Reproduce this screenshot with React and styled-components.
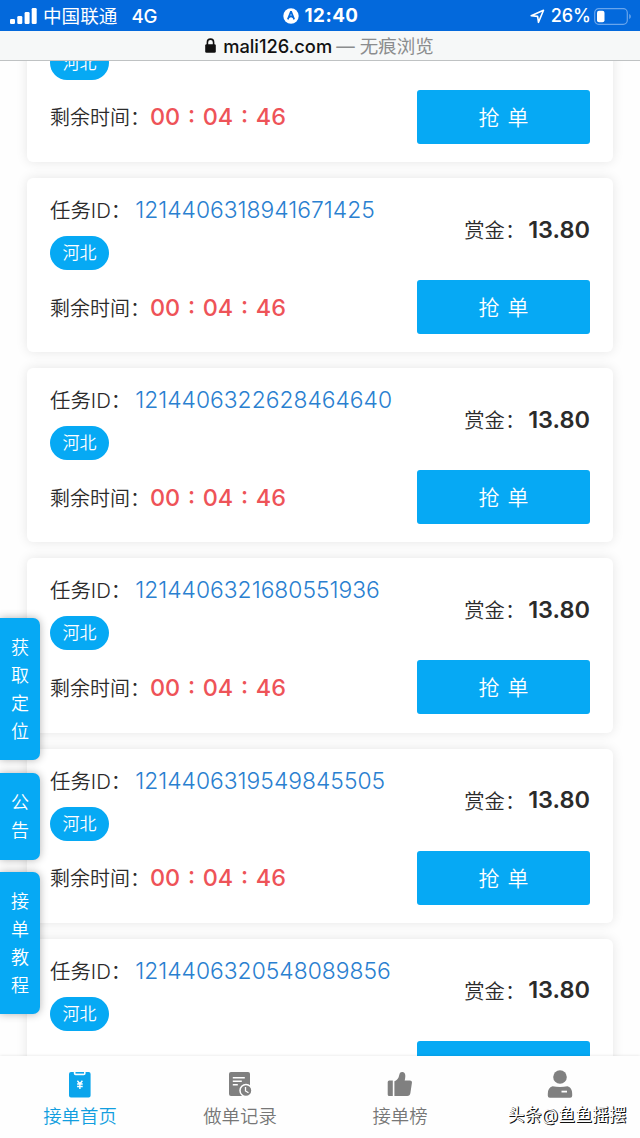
import styled, { createGlobalStyle } from "styled-components"

const GlobalStyle = createGlobalStyle`
  * {
    box-sizing: border-box;
  }

  body {
    margin: 0;
    font-family: Inter, "Noto Sans CJK SC", sans-serif;
    font-weight: 350;
    color: #2b2b2b;
    background-color: #fefefe;
  }
`

const Page = styled.div`
  position: relative;
  display: flex;
  flex-direction: column;
  width: 640px;
  height: 1138px;
  overflow: hidden;
`

const StatusBar = styled.header`
  display: grid;
  grid-template-columns: 1fr auto 1fr;
  align-items: center;
  flex: none;
  height: 31px;
  padding: 1px 8px 0 10px;
  background-color: #0369dc;
  color: #fff;
  font-size: 18px;
  font-weight: 400;
  line-height: 28px;
  white-space: nowrap;
`

const StatusGroup = styled.div`
  display: flex;
  align-items: center;
  justify-content: ${(props) => (props.$end ? "flex-end" : "flex-start")};
  gap: ${(props) => props.$gap || 0}px;
`

const Carrier = styled.span`
  margin-left: 6px;
  font-size: 18.6px;
`

const Network = styled.span`
  margin-left: 14px;
  font-size: 18.6px;
  font-weight: 500;
`

const Clock = styled.span`
  margin-left: -2px;
  font-size: 18.8px;
  font-weight: 700;
  letter-spacing: 0.5px;
`

const Battery = styled.span`
  margin-right: -3px;
  font-size: 18px;
  font-weight: 500;
`

const AddressBar = styled.div`
  display: flex;
  align-items: center;
  justify-content: center;
  flex: none;
  height: 30px;
  padding-right: 1px;
  background-color: #f6f8f8;
  border-bottom: 1px solid #bfc2c3;
  color: #111;
  font-size: 18.3px;
  font-weight: 500;
  line-height: 28px;
  white-space: nowrap;
`

const Domain = styled.span`
  margin-left: 7px;
`

const Mode = styled.span`
  margin-left: 4px;
  color: #8b8d8e;
  font-size: 18.5px;
  font-weight: 400;
`

const List = styled.main`
  display: flex;
  flex-direction: column;
  flex: 1;
  gap: 16px;
  min-height: 0;
  padding: 0 27px;
  overflow: hidden;
`

const Card = styled.section`
  display: grid;
  grid-template-columns: 1fr 173px;
  grid-template-rows: 102px 54px;
  flex: none;
  height: 174.2px;
  padding: 0 23px;
  border-radius: 6px;
  background-color: #fff;
  box-shadow: 0 0 12px rgba(0, 0, 0, 0.1);

  &:first-child {
    margin-top: -73.2px;
  }
`

const TaskInfo = styled.div`
  padding-top: 17px;
  font-size: 20.4px;
  line-height: 30px;
  white-space: nowrap;
`

const TaskId = styled.span`
  margin-left: 4px;
  color: #2a80d0;
  font-size: 22.85px;
  font-weight: 300;
`

const Region = styled.div`
  width: 59px;
  height: 34px;
  margin-top: 10px;
  border-radius: 17px;
  background-color: #06a9f4;
  color: #fff;
  font-size: 17px;
  line-height: 34px;
  text-align: center;
`

const Reward = styled.div`
  display: flex;
  align-items: center;
  justify-content: flex-end;
  height: 102px;
  font-size: 20.3px;
  white-space: nowrap;

  strong {
    margin-left: 3px;
    font-size: 23.5px;
    font-weight: 600;
  }
`

const TimeLeft = styled.div`
  display: flex;
  align-items: center;
  height: 54px;
  font-size: 20px;
`

const Countdown = styled.span`
  color: #ee5358;
  font-size: 23.4px;
  font-weight: 500;
  white-space: pre;
  word-spacing: 1.5px;
`

const GrabButton = styled.button`
  height: 54px;
  padding-bottom: 3px;
  border: 0;
  border-radius: 3px;
  background-color: #06a9f4;
  color: #fff;
  font: inherit;
  font-size: 21px;
  word-spacing: 2px;
`

const SideMenu = styled.aside`
  position: absolute;
  top: 618px;
  left: 0;
  display: flex;
  flex-direction: column;
  gap: 12.5px;
`

const SideItem = styled.div`
  width: 40px;
  padding: 16px 11px 15px;
  border-radius: 0 7px 7px 0;
  background-color: #06a9f4;
  box-shadow: 0 0 9px rgba(0, 0, 0, 0.3);
  color: #fff;
  font-size: 18px;
  line-height: 27.85px;
  word-break: break-all;
`

const TabBar = styled.nav`
  display: grid;
  grid-template-columns: repeat(4, 1fr);
  flex: none;
  height: 82px;
  background-color: #fefefe;
  box-shadow: 0 0 3px rgba(0, 0, 0, 0.12);
  z-index: 1;
`

const Tab = styled.div`
  display: flex;
  flex-direction: column;
  align-items: center;
  padding-top: 12px;
  color: ${(props) => (props.$active ? "#129edf" : "#777")};
  font-size: 18.4px;
  line-height: 28px;

  svg {
    margin-bottom: 2px;
  }
`

const Watermark = styled.div`
  position: absolute;
  right: 14px;
  bottom: 9px;
  z-index: 2;
  color: #fff;
  font-size: 17px;
  font-weight: 400;
  line-height: 28px;
  white-space: nowrap;
  text-shadow: 1px 1px 0 #111, 1px 0 0 #333;
`

const tasks = [
  "1214406318941671424",
  "1214406318941671425",
  "1214406322628464640",
  "1214406321680551936",
  "1214406319549845505",
  "1214406320548089856",
]

function SignalIcon() {
  return (
    <svg width="27" height="18" viewBox="0 0 27 18" fill="#fff">
      <rect x="0" y="12" width="5" height="5" rx="1.3" />
      <rect x="7.3" y="9" width="5" height="8" rx="1.3" />
      <rect x="14.6" y="5" width="5" height="12" rx="1.3" />
      <rect x="21.7" y="1" width="5" height="16" rx="1.3" />
    </svg>
  )
}

function CompassIcon() {
  return (
    <svg width="16" height="16" viewBox="0 0 16 16">
      <circle cx="8" cy="8" r="7.7" fill="#fff" />
      <path d="M8 3.4 11.2 11.4M8 3.4 4.8 11.4M6 9.2 8 8.2 10 9.2" fill="none" stroke="#0369dc" strokeWidth="1.7" strokeLinejoin="round" />
    </svg>
  )
}

function ArrowIcon() {
  return (
    <svg width="15" height="15" viewBox="0 0 15 15" fill="none" stroke="#fff" strokeWidth="1.6" strokeLinejoin="round">
      <path d="M1.2 6.8 13.5 1.3 8.5 13.3 7.6 7.4Z" />
    </svg>
  )
}

function BatteryIcon() {
  return (
    <svg width="38" height="17" viewBox="0 0 38 17">
      <rect x="0.7" y="0.7" width="32.6" height="15.6" rx="4" fill="none" stroke="#68a5ec" strokeWidth="1.2" />
      <rect x="3" y="2.8" width="7.5" height="11.4" rx="2" fill="#fff" />
      <path d="M35.2 6v5c2.2-.8 2.2-4.2 0-5" fill="#68a5ec" />
    </svg>
  )
}

function LockIcon() {
  return (
    <svg width="11" height="15" viewBox="0 0 11 15">
      <rect x="0.2" y="6.2" width="10.6" height="8.6" rx="1.4" fill="#111" />
      <path d="M2.4 7V4.2a3.1 3.1 0 0 1 6.2 0V7" fill="none" stroke="#111" strokeWidth="1.6" />
    </svg>
  )
}

function OrderIcon() {
  return (
    <svg width="28" height="32" viewBox="0 0 28 32">
      <path d="M5 4h2.8v1.5a1.8 1.8 0 0 0 1.8 1.8h8.2a1.8 1.8 0 0 0 1.8-1.8V4h3a2 2 0 0 1 2 2v21.5a2 2 0 0 1-2 2H5a2 2 0 0 1-2-2V6a2 2 0 0 1 2-2Z" fill="#0ba5ec" />
      <path d="M9.5 4H18v1.6H9.5Z" fill="#0ba5ec" />
      <path d="m11.4 12.8 2.5 3 2.5-3M11.1 16h5.6M11.1 18.5h5.6M13.9 15.5v5.4" fill="none" stroke="#fff" strokeWidth="1.4" />
    </svg>
  )
}

function RecordIcon() {
  return (
    <svg width="28" height="32" viewBox="0 0 28 32">
      <path d="M5 4h17a2 2 0 0 1 2 2v20a2 2 0 0 1-2 2H5a2 2 0 0 1-2-2V6a2 2 0 0 1 2-2Z" fill="#808080" />
      <path d="M6.8 9.8h12M6.8 13.3h9M6.8 16.8h5" fill="none" stroke="#fff" strokeWidth="1.5" />
      <circle cx="20" cy="22.5" r="6" fill="#808080" stroke="#fff" strokeWidth="1.5" />
      <path d="M19.5 19v4l3 1.8" fill="none" stroke="#fff" strokeWidth="1.3" />
    </svg>
  )
}

function ThumbIcon() {
  return (
    <svg width="28" height="32" viewBox="0 0 28 32" fill="#808080">
      <path d="M3.2 12.5h3.6V28H3.2a1.5 1.5 0 0 1-1.5-1.5V14a1.5 1.5 0 0 1 1.5-1.5Z" />
      <path d="M8.4 13.3C12 12 12.6 9.5 13.4 6.5 14 4.4 15 3.8 16.5 4c2.9.4 3.5 3.3 2.2 8.5h5a2.2 2.2 0 0 1 2.2 2.6l-1.5 10A3.3 3.3 0 0 1 21.2 28H8.4Z" />
    </svg>
  )
}

function UserIcon() {
  return (
    <svg width="28" height="32" viewBox="0 0 28 32">
      <circle cx="14" cy="9" r="6.8" fill="#808080" />
      <path d="M6.500 18.300c5 .9 10 .9 15 0 3.200.8 4.700 3.700 4.700 7.500v2a2 2 0 0 1-2 2H3.800a2 2 0 0 1-2-2v-2c0-3.800 1.500-6.700 4.700-7.500Z" fill="#808080" />
      <path d="M15.500 23.600h5.500" stroke="#fff" strokeWidth="1.8" />
    </svg>
  )
}

function Task({ id }) {
  return (
    <Card>
      <TaskInfo>
        任务ID：<TaskId>{id}</TaskId>
        <Region>河北</Region>
      </TaskInfo>
      <Reward>
        赏金：<strong>13.80</strong>
      </Reward>
      <TimeLeft>
        剩余时间：<Countdown>00 : 04 : 46</Countdown>
      </TimeLeft>
      <GrabButton>抢 单</GrabButton>
    </Card>
  )
}

function App() {
  return (
    <Page>
      <GlobalStyle />
      <StatusBar>
        <StatusGroup>
          <SignalIcon />
          <Carrier>中国联通</Carrier>
          <Network>4G</Network>
        </StatusGroup>
        <StatusGroup $gap={7}>
          <CompassIcon />
          <Clock>12:40</Clock>
        </StatusGroup>
        <StatusGroup $end $gap={6}>
          <ArrowIcon />
          <Battery>26%</Battery>
          <BatteryIcon />
        </StatusGroup>
      </StatusBar>
      <AddressBar>
        <LockIcon />
        <Domain>mali126.com</Domain>
        <Mode>— 无痕浏览</Mode>
      </AddressBar>
      <List>
        {tasks.map((id) => (
          <Task key={id} id={id} />
        ))}
      </List>
      <TabBar>
        <Tab $active>
          <OrderIcon />
          接单首页
        </Tab>
        <Tab>
          <RecordIcon />
          做单记录
        </Tab>
        <Tab>
          <ThumbIcon />
          接单榜
        </Tab>
        <Tab>
          <UserIcon />
        </Tab>
      </TabBar>
      <SideMenu>
        <SideItem>获取定位</SideItem>
        <SideItem>公告</SideItem>
        <SideItem>接单教程</SideItem>
      </SideMenu>
      <Watermark>头条@鱼鱼摇摆</Watermark>
    </Page>
  )
}

export default App
